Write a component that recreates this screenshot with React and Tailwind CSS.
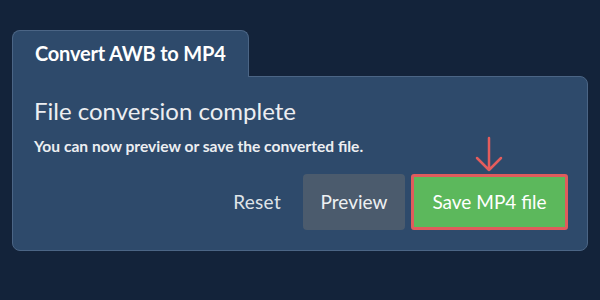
export default function App() {
    return (
        <div className="w-[600px] h-[300px] bg-[#13233a] px-3 pt-[30px] font-['Lato','Liberation_Sans',sans-serif]">
            {/* Tab */}
            <div className="relative z-10 -mb-px inline-flex items-center h-[47px] px-[22px] pb-[2px] bg-[#2e4a6b] border border-b-0 border-[#4b6585] rounded-t-lg">
                <span className="text-white text-[20px] font-bold tracking-[-0.2px]">Convert AWB to MP4</span>
            </div>

            {/* Panel */}
            <div className="h-[175px] bg-[#2e4a6b] border border-[#4b6585] rounded-b-lg rounded-tr-lg pl-[21px] pr-[19px] pt-[19px]">
                <h2 className="text-[#eceef1] text-[24px] leading-[30px]">File conversion complete</h2>
                <p className="mt-[10px] text-[#eceef1] text-[15.6px] font-bold leading-[20px]">
                    You can now preview or save the converted file.
                </p>

                <div className="mt-[18px] flex items-center justify-end">
                    <button className="px-[10px] text-[#dfe3e8] text-[19px] tracking-[0.3px]">Reset</button>
                    <button className="ml-[12px] h-[56px] w-[102px] rounded bg-[#4b5b6d] text-[#eef0f2] text-[19px]">
                        Preview
                    </button>
                    <div className="relative ml-[6px]">
                        <svg className="absolute left-[63px] -top-[38px] w-[30px] h-[38px]" viewBox="0 0 30 38" fill="none" stroke="#e35d5d" strokeWidth="2.5" strokeLinecap="round" strokeLinejoin="round">
                            <path d="M15 2v32M3 22l12 12 12-12" />
                        </svg>
                        <button className="h-[56px] w-[157px] rounded-[3px] border-[3px] border-[#e05c5c] bg-[#5cb85c] text-white text-[19px]">
                            Save MP4 file
                        </button>
                    </div>
                </div>
            </div>
        </div>
    );
}
